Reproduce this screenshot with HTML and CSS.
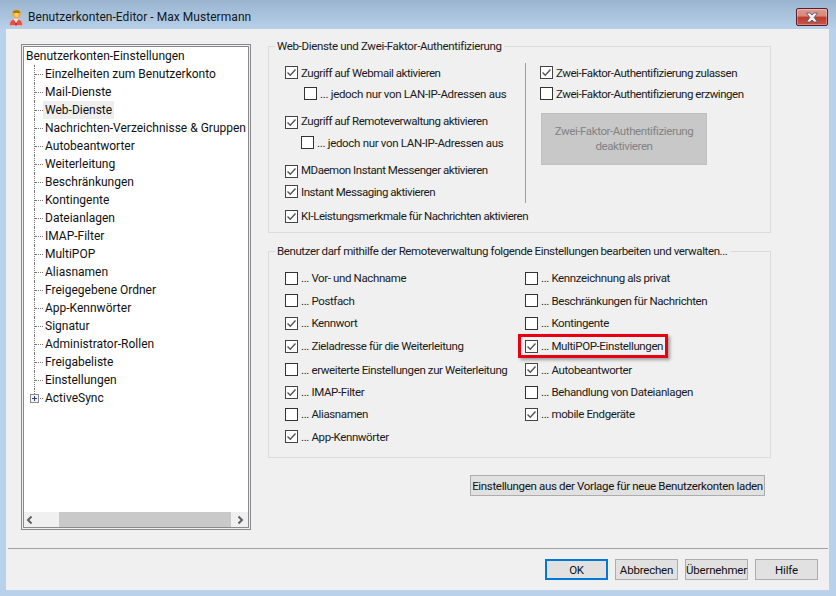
FILE: index.html
```html
<!DOCTYPE html>
<html lang="de">
<head>
<meta charset="utf-8">
<title>Benutzerkonten-Editor</title>
<link rel="stylesheet" href="styles.css">
</head>
<body>
<div class="window">
  <header class="titlebar">
    <svg class="appicon" width="14" height="17" viewBox="0 0 14 17">
      <path d="M.5 16.500c0-4 1.500-6.500 6.500-6.500s6.500 2.500 6.500 6.500z" fill="#e0524a" stroke="#f2b4ae" stroke-width=".8"/>
      <path d="M4.500 10l2.500 4 2.500-4z" fill="#fbe9d8"/>
      <path d="M7 14v2.500" stroke="#a81e18" stroke-width="1.200"/>
      <circle cx="7.500" cy="4.700" r="4.300" fill="#eeaa22"/>
      <path d="M3.600 3.500C4.500.6 10.500.6 11.400 3.500 9 4.300 6 4.300 3.600 3.500z" fill="#a87412"/>
      <circle cx="7.500" cy="6" r="2.200" fill="#f8cf5e"/>
    </svg>
    <span class="title">Benutzerkonten-Editor - Max Mustermann</span>
    <button class="close" aria-label="Schließen">
      <svg width="14" height="11" viewBox="0 0 14 11">
        <path d="M1.500 1h3.300L7 3l2.200-2h3.300L9.200 5.500l3.300 4.500H9.200L7 8 4.800 10H1.500l3.300-4.500z" fill="#f2f2f6" stroke="#47505e" stroke-width=".8"/>
      </svg>
    </button>
  </header>
  <main class="client">
    <div class="content">
      <aside class="tree">
        <div class="tree-body">
          <div class="root">Benutzerkonten-Einstellungen</div>
          <ul class="nodes">
            <li>Einzelheiten zum Benutzerkonto</li>
            <li>Mail-Dienste</li>
            <li><span class="sel">Web-Dienste</span></li>
            <li>Nachrichten-Verzeichnisse &amp; Gruppen</li>
            <li>Autobeantworter</li>
            <li>Weiterleitung</li>
            <li>Beschränkungen</li>
            <li>Kontingente</li>
            <li>Dateianlagen</li>
            <li>IMAP-Filter</li>
            <li>MultiPOP</li>
            <li>Aliasnamen</li>
            <li>Freigegebene Ordner</li>
            <li>App-Kennwörter</li>
            <li>Signatur</li>
            <li>Administrator-Rollen</li>
            <li>Freigabeliste</li>
            <li>Einstellungen</li>
            <li class="last"><span class="plus"></span>ActiveSync</li>
          </ul>
        </div>
        <div class="hscroll">
          <svg class="arrow-l" width="10" height="10" viewBox="0 0 10 10"><path d="M6.500 1.500L3 5l3.500 3.500" fill="none" stroke="#606060" stroke-width="2"/></svg>
          <div class="thumb"></div>
          <svg class="arrow-r" width="10" height="10" viewBox="0 0 10 10"><path d="M3.500 1.500L7 5 3.500 8.500" fill="none" stroke="#606060" stroke-width="2"/></svg>
        </div>
      </aside>
      <div class="panels">
        <fieldset class="group g1">
          <legend>Web-Dienste und Zwei-Faktor-Authentifizierung</legend>
          <div class="g1-top">
            <div class="g1-left">
              <label class="cb r-a"><i class="box on"></i>Zugriff auf Webmail aktivieren</label>
              <label class="cb r-b ind1"><i class="box"></i>... jedoch nur von LAN-IP-Adressen aus</label>
              <label class="cb r-c"><i class="box on"></i>Zugriff auf Remoteverwaltung aktivieren</label>
              <label class="cb r-b ind2"><i class="box"></i>... jedoch nur von LAN-IP-Adressen aus</label>
              <label class="cb r-c"><i class="box on"></i>MDaemon Instant Messenger aktivieren</label>
              <label class="cb r-b"><i class="box on"></i>Instant Messaging aktivieren</label>
            </div>
            <div class="vline"></div>
            <div class="g1-right">
              <label class="cb r-a"><i class="box on"></i>Zwei-Faktor-Authentifizierung zulassen</label>
              <label class="cb r-b"><i class="box"></i>Zwei-Faktor-Authentifizierung erzwingen</label>
              <button class="disabled">Zwei-Faktor-Authentifizierung deaktivieren</button>
            </div>
          </div>
          <label class="cb r-ki"><i class="box on"></i>KI-Leistungsmerkmale für Nachrichten aktivieren</label>
        </fieldset>
        <fieldset class="group g2">
          <legend>Benutzer darf mithilfe der Remoteverwaltung folgende Einstellungen bearbeiten und verwalten...</legend>
          <div class="perm">
            <label class="cb"><i class="box"></i>... Vor- und Nachname</label>
            <label class="cb"><i class="box"></i>... Kennzeichnung als privat</label>
            <label class="cb"><i class="box"></i>... Postfach</label>
            <label class="cb"><i class="box"></i>... Beschränkungen für Nachrichten</label>
            <label class="cb"><i class="box on"></i>... Kennwort</label>
            <label class="cb"><i class="box"></i>... Kontingente</label>
            <label class="cb"><i class="box on"></i>... Zieladresse für die Weiterleitung</label>
            <label class="cb mark"><i class="box on"></i>... MultiPOP-Einstellungen</label>
            <label class="cb"><i class="box"></i>... erweiterte Einstellungen zur Weiterleitung</label>
            <label class="cb"><i class="box on"></i>... Autobeantworter</label>
            <label class="cb"><i class="box on"></i>... IMAP-Filter</label>
            <label class="cb"><i class="box"></i>... Behandlung von Dateianlagen</label>
            <label class="cb"><i class="box"></i>... Aliasnamen</label>
            <label class="cb"><i class="box on"></i>... mobile Endgeräte</label>
            <label class="cb"><i class="box on"></i>... App-Kennwörter</label>
          </div>
        </fieldset>
        <div class="tpl-row"><button class="btn tpl">Einstellungen aus der Vorlage für neue Benutzerkonten laden</button></div>
      </div>
    </div>
    <footer class="footer">
      <button class="btn act default">OK</button>
      <button class="btn act">Abbrechen</button>
      <button class="btn act">Übernehmer</button>
      <button class="btn act">Hilfe</button>
    </footer>
  </main>
</div>
</body>
</html>
```
FILE: styles.css
```css
* { box-sizing: border-box; }
html, body { margin: 0; height: 100%; }
body { font: 12px/16px Roboto, "Open Sans", "Liberation Sans", sans-serif; color: #111; overflow: hidden; }
.window {
  width: 836px; height: 596px; display: flex; flex-direction: column;
  background: linear-gradient(#9ab4d0 0, #b9d1ea 30px);
  padding: 0 7px 6px 6px;
}
.titlebar { height: 29px; flex: none; display: flex; align-items: flex-start; }
.appicon { margin: 9px 0 0 3px; }
.title { margin: 9px 0 0 5px; line-height: 17px; color: #101820; letter-spacing: .05px; }
.close {
  margin: 8px 1px 0 auto; width: 32px; height: 18px; padding: 0; border: 1px solid #5a1f2e; border-radius: 2px;
  background: linear-gradient(#e09a8e 0, #d8867a 45%, #bb3a2c 50%, #c9584a 100%);
  box-shadow: inset 0 0 0 1px rgba(255,255,255,.3); display: flex; align-items: center; justify-content: center;
}
.client { flex: 1; background: #f0f0f0; display: flex; flex-direction: column; min-height: 0; }
.content { flex: none; height: 519px; display: flex; padding: 15px 0 0 15px; }
.tree {
  width: 230px; height: 486px; flex: none; background: #fff;
  border: 1px solid #8a8a8e; box-shadow: inset 0 0 0 1px #f0f0f0, inset 0 0 0 2px #8a8a8e;
  padding: 2px; display: flex; flex-direction: column;
}
.tree-body { flex: 1; padding: 0 0 0 2px; overflow: hidden; white-space: nowrap; }
.root { height: 18px; line-height: 18px; }
.nodes { list-style: none; margin: 0; padding: 0; position: relative; }
.nodes li { height: 18px; line-height: 18px; padding-left: 19px; position: relative; }
.nodes li::before { content: ""; position: absolute; left: 8px; top: 0; height: 18px; border-left: 1px dotted #777; }
.nodes li::after { content: ""; position: absolute; left: 9px; top: 9px; width: 8px; border-top: 1px dotted #777; }
.nodes li.last::before { height: 5px; }
.sel { display: inline-block; background: #eee; height: 18px; padding: 0 2px; margin-left: -2px; }
.plus {
  position: absolute; left: 4px; top: 5px; width: 9px; height: 9px; z-index: 1; background:
    linear-gradient(#2a3f7a, #2a3f7a) center / 5px 1px no-repeat,
    linear-gradient(#2a3f7a, #2a3f7a) center / 1px 5px no-repeat, #f4f4f4;
  border: 1px solid #8a8a8a;
}
.hscroll { height: 15px; flex: none; background: #f0f0f0; display: flex; align-items: center; }
.hscroll svg { flex: none; }
.arrow-l { margin: 0 24px 0 1px; }
.thumb { width: 172px; height: 15px; background: #c9c9c9; }
.arrow-r { margin-left: 4px; }
.panels { margin-left: 17px; width: 503px; flex: none; display: flex; flex-direction: column; font-size: 11.5px; letter-spacing: -.33px; }
fieldset.group { margin: 0; padding: 0 0 0 16px; border: 1px solid #dcdcdc; min-width: 0; }
legend { padding: 0 2px; margin-left: -10px; line-height: 16px; color: #1a1a1a; white-space: nowrap; }
.g2 legend { letter-spacing: -.4px; }
fieldset.g1 { height: 195px; margin-top: -6px; }
.g1-top { display: flex; height: 151px; padding-top: 8px; }
.g1-left { width: 240px; flex: none; }
.vline { width: 1px; height: 140px; background: #a0a0a0; margin-top: 1px; flex: none; }
.g1-right { margin-left: 14px; }
.cb { display: flex; align-items: center; height: 22px; white-space: nowrap; color: #1a1a1a; position: relative; }
.g1 .cb { letter-spacing: -.46px; }
.g1 .ind1, .g1 .ind2 { letter-spacing: -.31px; }
.box { width: 13px; height: 13px; flex: none; margin-right: 3px; border: 1px solid #333; background: #fff center / 11px 11px no-repeat; }
.box.on {
  border-color: #444;
  background-image: url("data:image/svg+xml,%3Csvg xmlns='http://www.w3.org/2000/svg' viewBox='0 0 11 11'%3E%3Cpath d='M1.500 5.500L4.300 8.300 9.500 2.500' fill='none' stroke='%23555' stroke-width='1.400'/%3E%3C/svg%3E");
}
.r-a, .r-b { height: 21px; }
.r-c { height: 28px; align-items: flex-end; padding-bottom: 3px; }
.ind1 { padding-left: 19px; }
.ind2 { padding-left: 16px; }
.r-ki { height: 22px; }
.disabled {
  display: block; margin: 9px 0 0 1px; width: 166px; height: 52px; padding: 0 8px; font: inherit; letter-spacing: -.4px; line-height: 15px;
  color: #838383; background: #c8c8c8; border: 1px solid #c0c0c0;
}
fieldset.g2 { margin-top: 10px; height: 215px; }
.perm { display: grid; padding-top: 8px; grid-template-columns: 240px 1fr; grid-template-rows: 22px 23px 22px 24px 23px 22px 22px 23px; letter-spacing: -.38px; }
.perm .cb { height: auto; }
.mark::after {
  content: ""; position: absolute; left: -7px; top: 0; width: 144px; height: 18px;
  border: 3px solid #e60012; box-shadow: 2px 2px 3px rgba(0,0,0,.35); pointer-events: none;
}
.tpl-row { display: flex; justify-content: flex-end; margin: 17px 6px 0 0; }
.btn { font: inherit; letter-spacing: inherit; color: #111; background: #e1e1e1; border: 1px solid #adadad; padding: 0; white-space: nowrap; }
.tpl { width: 295px; height: 21px; }
.footer {
  flex: 1; margin: 0 1px 0 2px; border-top: 1px solid #a0a0a0; padding: 10px 10px 0 0;
  display: flex; justify-content: flex-end; align-items: flex-start; gap: 7px; font-size: 11.5px; letter-spacing: -.2px;
}
.act { width: 63px; height: 21px; }
.default { border: 2px solid #0078d7; }
```
